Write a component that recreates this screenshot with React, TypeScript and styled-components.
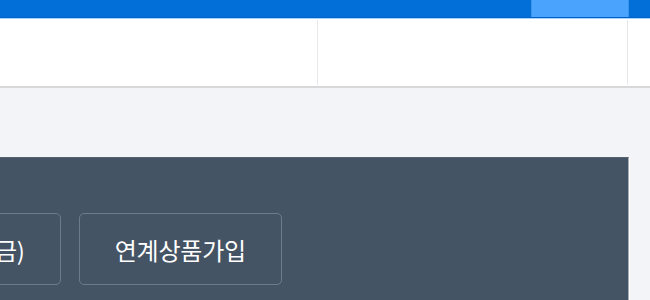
import styled, { createGlobalStyle } from 'styled-components';

const GlobalStyle = createGlobalStyle`
  html, body {
    margin: 0;
    padding: 0;
    background: #f3f4f8;
    overflow: hidden;
    font-family: 'Noto Sans CJK KR', 'Noto Sans', sans-serif;
  }
`;

const TopNav = styled.div`
  display: flex;
  height: 17px;
  background: #026fd9;
  border-bottom: 1px solid #0062c6;
  box-shadow: 0 1px 0 #a9d3ff;
`;

const NavSpacer = styled.div`
  flex: 1;
`;

const NavTab = styled.div<{ $active?: boolean }>`
  width: ${({ $active }) => ($active ? '96px' : '21px')};
  background: ${({ $active }) => ($active ? '#4aa3fd' : 'transparent')};
  border-left: ${({ $active }) => ($active ? '1px solid #3d93ec' : 'none')};
  border-right: ${({ $active }) => ($active ? '1px solid #3d93ec' : 'none')};
`;

const Header = styled.div`
  display: grid;
  grid-template-columns: 318px 310px 1fr;
  height: 69px;
  margin-top: 1px;
  background: #fff;
  border-bottom: 2px solid #d7d8da;
  box-sizing: border-box;
`;

const HeaderCell = styled.div<{ $last?: boolean }>`
  margin: 1px 0 1px;
  border-right: ${({ $last }) => ($last ? 'none' : '1px solid #e6e8eb')};
`;

const Main = styled.div`
  padding-top: 69px;
`;

const Panel = styled.div`
  width: 629px;
  height: 200px;
  padding-top: 55px;
  box-sizing: border-box;
  background: #455464;
  border-top: 1px solid #56636f;
  border-right: 1px solid #a7afb8;
  box-shadow: 1px 0 0 #ffffff;
`;

const ButtonRow = styled.div`
  display: flex;
  justify-content: flex-end;
  gap: 18px;
  width: 282px;
`;

const ActionButton = styled.button`
  flex-shrink: 0;
  height: 72px;
  padding: 0 35px;
  border: 1px solid #6f7b88;
  border-radius: 5px;
  background: transparent;
  color: #ffffff;
  font-family: 'Noto Sans CJK KR', 'Noto Sans', sans-serif;
  font-size: 24px;
  font-weight: 400;
  letter-spacing: -0.2px;
  white-space: nowrap;
  cursor: pointer;
`;

const App = () => {
  return (
    <>
      <GlobalStyle />
      <TopNav>
        <NavSpacer />
        <NavTab $active />
        <NavTab />
      </TopNav>
      <Header>
        <HeaderCell />
        <HeaderCell />
        <HeaderCell $last />
      </Header>
      <Main>
        <Panel>
          <ButtonRow>
            <ActionButton>약정할인(위약금)</ActionButton>
            <ActionButton>연계상품가입</ActionButton>
          </ButtonRow>
        </Panel>
      </Main>
    </>
  );
};

export default App;
